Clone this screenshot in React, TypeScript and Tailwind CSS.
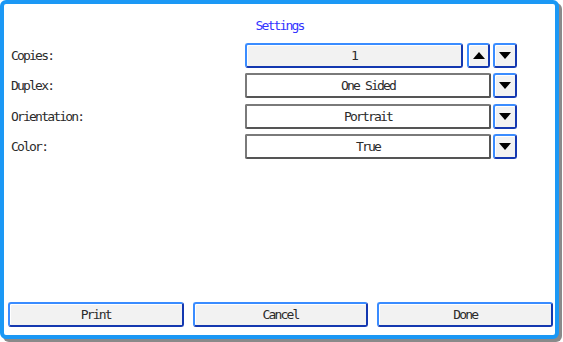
import type { ReactNode } from "react";

const font = "font-['DejaVu_Sans_Mono',monospace] text-[13px] tracking-[-1.8px]";

function Triangle({ up }: { up?: boolean }) {
  return (
    <svg width="12" height="7" viewBox="0 0 12 7" aria-hidden="true">
      <path d={up ? "M0 7L6 0L12 7Z" : "M0 0L12 0L6 7Z"} fill="#000" />
    </svg>
  );
}

/** Raised blue-edged panel button, used for arrows, the counter and the footer. */
function BlueButton({ className = "", children }: { className?: string; children?: ReactNode }) {
  return (
    <div
      className={`flex items-center justify-center rounded-[3px] border-2 border-t-[#3a8cff] border-l-[#3a8cff] border-r-[#1438b0] border-b-[#1438b0] bg-[#f2f2f2] shadow-[inset_1px_1px_0_#ffffff] text-[#2b2b2b] ${className}`}
    >
      {children}
    </div>
  );
}

function SelectBox({ value }: { value: string }) {
  return (
    <div className="flex h-[25px] flex-1 items-center justify-center rounded-[2px] border-2 border-[#7a7a7a] border-b-[#555] border-r-[#555] bg-white text-[#2b2b2b]">
      {value}
    </div>
  );
}

function Row({ label, className = "", children }: { label: string; className?: string; children: ReactNode }) {
  return (
    <div className={`flex h-[25px] items-center ${className}`}>
      <div className="w-[234px] text-[#2b2b2b]">{label}</div>
      <div className="flex w-[272px] items-center">{children}</div>
    </div>
  );
}

export default function App() {
  return (
    <div className={`h-[342px] w-[563px] bg-white ${font}`}>
      <div className="flex h-[339px] w-[559px] flex-col rounded-[6px] border-4 border-[#1b98f5] bg-white shadow-[3px_3px_0_#8a8a8a]">
        <div className="pt-[14px] text-center leading-[15px] text-[#3434ff]">Settings</div>

        <div className="mt-[10px] flex flex-col pl-[7px]">
          <Row label="Copies:">
            <BlueButton className="h-[25px] w-[218px]">1</BlueButton>
            <BlueButton className="ml-[4px] h-[25px] w-[23px]">
              <Triangle up />
            </BlueButton>
            <BlueButton className="ml-[3px] h-[25px] w-[24px]">
              <Triangle />
            </BlueButton>
          </Row>
          <Row label="Duplex:" className="mt-[5px]">
            <SelectBox value="One Sided" />
            <BlueButton className="ml-[2px] h-[25px] w-[24px]">
              <Triangle />
            </BlueButton>
          </Row>
          <Row label="Orientation:" className="mt-[6px]">
            <SelectBox value="Portrait" />
            <BlueButton className="ml-[2px] h-[25px] w-[24px]">
              <Triangle />
            </BlueButton>
          </Row>
          <Row label="Color:" className="mt-[5px]">
            <SelectBox value="True" />
            <BlueButton className="ml-[2px] h-[25px] w-[24px]">
              <Triangle />
            </BlueButton>
          </Row>
        </div>

        <div className="mt-auto flex gap-[9px] pb-[8px] pl-[4px] pr-[2px]">
          <BlueButton className="h-[25px] flex-1">Print</BlueButton>
          <BlueButton className="h-[25px] flex-1">Cancel</BlueButton>
          <BlueButton className="h-[25px] flex-1">Done</BlueButton>
        </div>
      </div>
    </div>
  );
}
